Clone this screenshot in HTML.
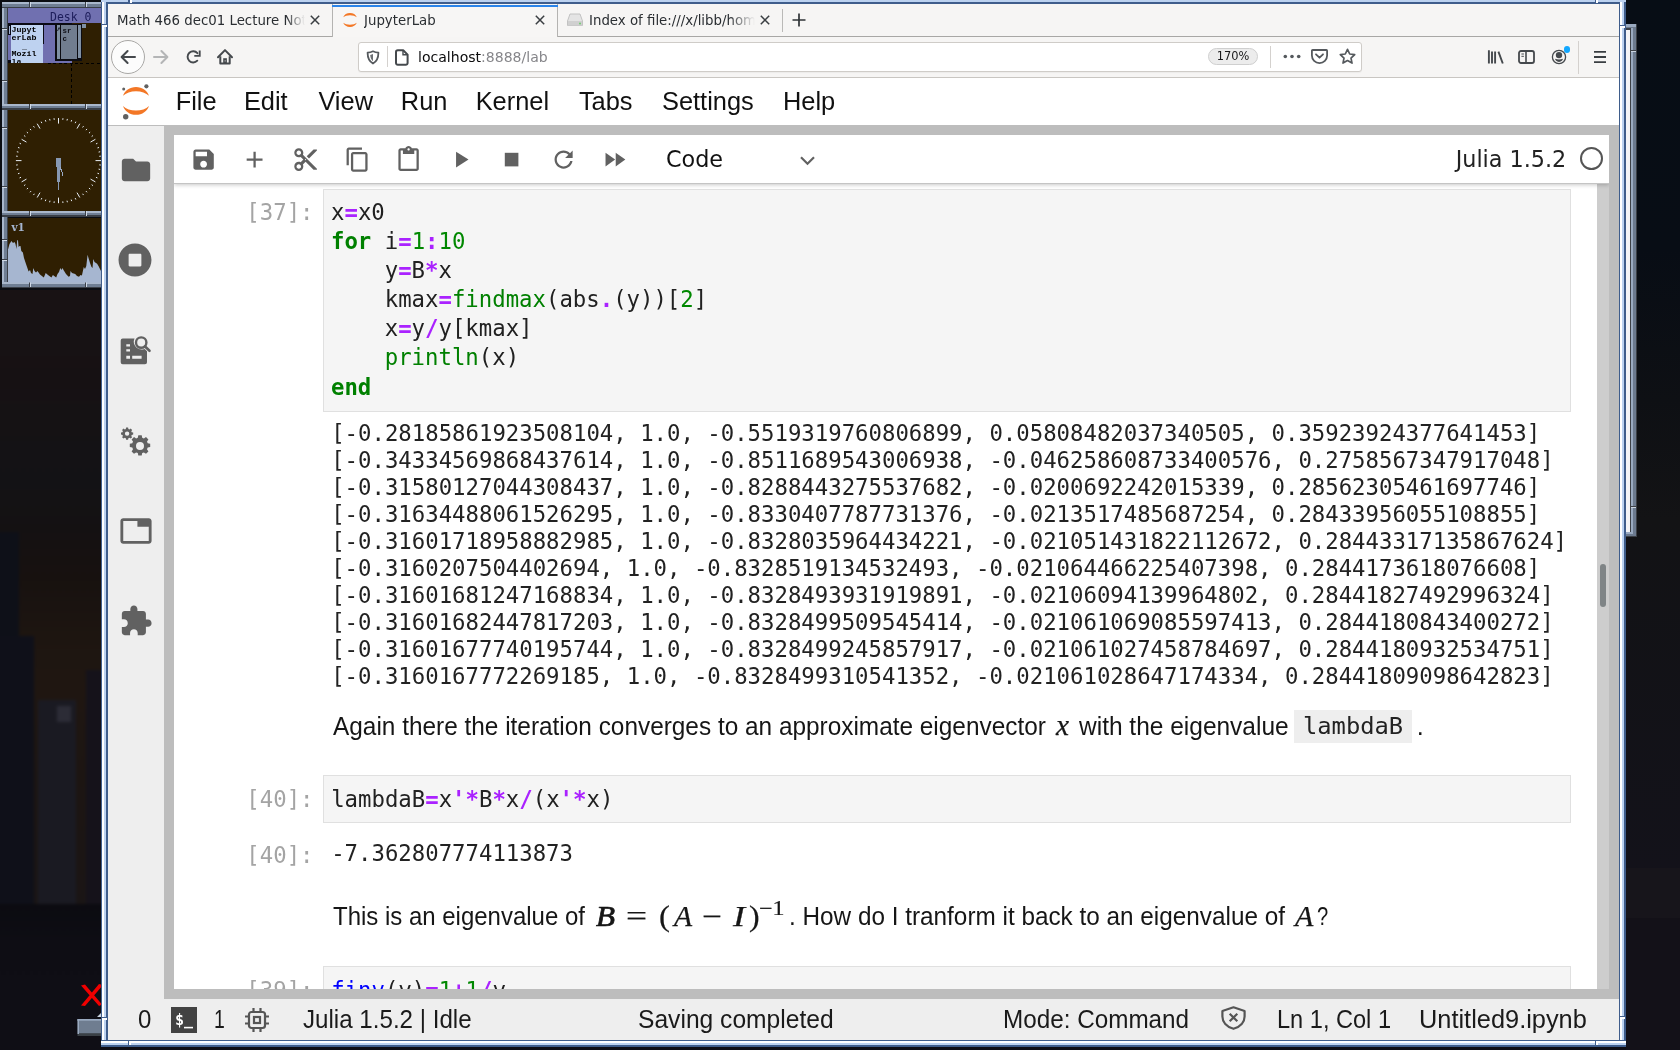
<!DOCTYPE html>
<html lang="en">
<head>
<meta charset="utf-8">
<title>JupyterLab</title>
<style>
*{box-sizing:border-box;margin:0;padding:0}
html,body{width:1680px;height:1050px;overflow:hidden;background:#121116}
body{position:relative;-webkit-font-smoothing:antialiased;font-family:"Liberation Sans",sans-serif;color:#000}
.abs{position:absolute}
svg{display:block;overflow:visible}
#desk{left:0;top:0;width:1680px;height:1050px;background:
 radial-gradient(ellipse 60px 200px at 60px 800px,rgba(40,36,44,.55),rgba(0,0,0,0) 100%),
 linear-gradient(180deg,#14110f 0,#16121a 290px,#1a1214 420px,#151318 600px,#100f16 800px,#0f0e15 1050px)}
#deskr{left:1626px;top:0;width:54px;height:1050px;background:linear-gradient(180deg,#070d15 0,#080d15 250px,#0e1014 400px,#131315 520px,#141217 800px,#16131b 1050px)}
/* ---------- window frame ---------- */
.fb{background:#bcd2f0}
/* ---------- firefox chrome ---------- */
#tabs{will-change:transform;left:108px;top:4px;width:1511px;height:33px;background:#f6f5f4;border-bottom:1px solid #a8a7a5;font-family:"DejaVu Sans",sans-serif;font-size:13.33px;color:#2a2e32;white-space:nowrap}
#tabs .t{top:0;height:33px;line-height:33.500px;overflow:hidden}
#nav{will-change:transform;left:108px;top:37px;width:1511px;height:41px;background:#f6f5f4;border-bottom:1px solid #c9c6c2}
#url{left:250px;top:5px;width:1004px;height:30px;background:#fff;border:1px solid #cfccc8;border-radius:3px;font-family:"DejaVu Sans",sans-serif;font-size:14.05px;line-height:28px;white-space:nowrap;box-shadow:0 1px 1px rgba(0,0,0,.04)}
/* ---------- jupyter ---------- */
#page{will-change:transform;left:108px;top:78px;width:1511px;height:962px;background:#bdbdbd;overflow:hidden}
#menu{left:0;top:0;width:1511px;height:48px;background:#fff;border-bottom:1px solid #bdbdbd;font-size:25.4px;line-height:47px;white-space:nowrap;color:#111}
#menu span{position:absolute;top:0}
#side{left:0;top:48px;width:56px;height:873px;background:#eee}
#nb{left:66px;top:57px;width:1435px;height:854px;background:#fff;overflow:hidden}
#tb{left:0;top:0;width:1435px;height:49px;background:#fff;border-bottom:1px solid #c4c4c4;box-shadow:0 1px 4px rgba(0,0,0,.22);z-index:3}
#tb svg{position:absolute}
#status{left:0;top:921px;width:1511px;height:41px;background:#eee;font-size:25px;line-height:40px;white-space:nowrap;color:#1a1a1a}
#status span{position:absolute;top:0}
.mono{font-family:"DejaVu Sans Mono",monospace;font-size:22.32px;white-space:pre}
.prompt{color:#a4a4a4;text-align:right}
.ed{background:#f5f5f5;border:1px solid #e0e0e0}
.code{line-height:29.17px;color:#212121}
.k{color:#008000;font-weight:bold}
.o{color:#aa22ff;font-weight:bold}
.n{color:#080}
.b{color:#008000}
.d{color:#00f}
.out{line-height:27px;color:#222}
.md{font-size:25.2px;white-space:nowrap;color:#161616}
.f{position:absolute;top:0;transform-origin:0 50%;white-space:nowrap}
.mi{font-family:"Liberation Serif",serif;font-style:italic;-webkit-text-stroke:.25px #111}
.mr{font-family:"Liberation Serif",serif;-webkit-text-stroke:.2px #111}
</style>
</head>
<body>
<div id="desk" class="abs"></div>
<div id="deskr" class="abs"></div>
<!-- faint skyline -->
<div class="abs" style="left:0;top:288px;width:101px;height:762px;overflow:hidden">
<div class="abs" style="left:-6px;top:-6px;width:120px;height:780px;filter:blur(1.600px)">
<div class="abs" style="left:0;top:0;width:120px;height:300px;background:linear-gradient(180deg,#181214 0,#161113 96px,#131215 196px,#141112 246px,#17110f 296px)"></div>
<div class="abs" style="left:0;top:296px;width:120px;height:330px;background:linear-gradient(180deg,#17110f 0,#1d1510 60px,#1f1611 110px,#1c1512 200px,#1a1515 330px)"></div>
<div class="abs" style="left:0;top:250px;width:25px;height:376px;background:#0e1018"></div>
<div class="abs" style="left:0;top:354px;width:40px;height:272px;background:#0f1019"></div>
<div class="abs" style="left:44px;top:418px;width:38px;height:208px;background:#1a1a22"></div>
<div class="abs" style="left:63px;top:424px;width:14px;height:16px;background:#2c2c36"></div>
<div class="abs" style="left:92px;top:388px;width:28px;height:238px;background:#15121a"></div>
<div class="abs" style="left:0;top:622px;width:120px;height:160px;background:linear-gradient(180deg,#0b0b10 0,#0e0d14 40px,#0f0e15 160px)"></div>
</div></div>
<div class="abs" style="left:1626px;top:540px;width:54px;height:330px;background:linear-gradient(180deg,#121215 0,#13121a 330px)"></div>
<div class="abs" style="left:1626px;top:868px;width:54px;height:50px;background:#17151b"></div>
<div class="abs" style="left:1626px;top:918px;width:54px;height:132px;background:#131118"></div>
<svg class="abs" style="left:0;top:0;will-change:transform" width="110" height="300" viewBox="0 0 110 300" shape-rendering="crispEdges">
<rect x="0" y="0" width="110" height="289.500" fill="#0b0d12"/>
<rect x="8" y="8" width="102" height="96" fill="#2f1f02"/>
<rect x="8" y="110" width="102" height="101" fill="#2f1f02"/>
<rect x="8" y="217.5" width="102" height="65" fill="#2f1f02"/>
<rect x="8" y="8" width="102" height="15" fill="#7070b0"/>
<rect x="8" y="23" width="63.5" height="40" fill="#7070b0"/>
<path d="M71.5 63V104" stroke="#000" stroke-width="1" stroke-dasharray="3 2.4" fill="none"/>
<path d="M48 63.5H110" stroke="#000" stroke-width="1" stroke-dasharray="3 2.4" fill="none"/>
<rect x="8" y="23" width="63.5" height="1.5" fill="#0a0a14"/>
<rect x="8" y="24" width="2.5" height="10.5" fill="#0a0a14"/>
<rect x="9" y="25.5" width="1" height="8" fill="#9fb0d0"/>
<rect x="10.5" y="24.5" width="32" height="38.5" fill="#bed2f0"/>
<rect x="42.5" y="24" width="1.3" height="20" fill="#0a0a14"/>
<rect x="8" y="60" width="2.5" height="3" fill="#0a0a14"/>
<rect x="55" y="24" width="27" height="36.8" fill="#0c0c12"/>
<rect x="56.5" y="25" width="3.5" height="34" fill="#8090a4"/>
<rect x="61" y="25" width="16" height="33.5" fill="#717d8f"/>
<rect x="78" y="25" width="3" height="33" fill="#8090a4"/>
<rect x="82" y="24" width="3.5" height="3.5" fill="#8090a4"/>
<clipPath id="mw"><rect x="8" y="24" width="40" height="39"/><rect x="50" y="24" width="40" height="39"/></clipPath>
<g clip-path="url(#mw)" font-family="'Liberation Mono',monospace" font-size="7.4" font-weight="bold" fill="#000" shape-rendering="auto">
<text x="11.5" y="32.3" textLength="25" lengthAdjust="spacingAndGlyphs">Jupyt</text>
<text x="11.5" y="40.3" textLength="25" lengthAdjust="spacingAndGlyphs">erLab</text>
<text x="22" y="48.8" textLength="5" lengthAdjust="spacingAndGlyphs">_</text>
<text x="11.5" y="56.3" textLength="25" lengthAdjust="spacingAndGlyphs">Mozil</text>
<text x="11.5" y="64.3" textLength="10" lengthAdjust="spacingAndGlyphs">la</text>
<text x="57" y="33" fill="#101018">^</text><text x="62.5" y="32.5" fill="#101018">sr</text><text x="62.5" y="40.5" fill="#101018">c</text>
</g>
<text x="50" y="20.5" font-family="'DejaVu Sans Mono',monospace" font-size="11.6" fill="#1c1c5a" shape-rendering="auto" textLength="41.5" lengthAdjust="spacingAndGlyphs">Desk 0</text>
<rect x="2" y="3" width="2" height="101" fill="#a9b7cb"/><rect x="4" y="3" width="2.5" height="101" fill="#6f7e93"/><rect x="6.5" y="3" width="1.5" height="101" fill="#3a3f47"/><rect x="2" y="27.5" width="5" height="1" fill="#3a3f47"/><rect x="2" y="28.5" width="5" height="1.2" fill="#cfd9e6"/><rect x="2" y="79.5" width="5" height="1" fill="#3a3f47"/><rect x="2" y="80.5" width="5" height="1.2" fill="#cfd9e6"/>
<rect x="2" y="2.2" width="108" height="2" fill="#a9b7cb"/><rect x="2" y="4.2" width="108" height="2.5" fill="#6f7e93"/><rect x="2" y="6.7" width="108" height="1.5" fill="#3a3f47"/><rect x="28.5" y="2.2" width="1" height="5" fill="#3a3f47"/><rect x="29.5" y="2.2" width="1.2" height="5" fill="#cfd9e6"/><rect x="84.5" y="2.2" width="1" height="5" fill="#3a3f47"/><rect x="85.5" y="2.2" width="1.2" height="5" fill="#cfd9e6"/>
<rect x="2" y="104" width="2" height="113" fill="#a9b7cb"/><rect x="4" y="104" width="2.5" height="113" fill="#6f7e93"/><rect x="6.5" y="104" width="1.5" height="113" fill="#3a3f47"/><rect x="2" y="126.5" width="5" height="1" fill="#3a3f47"/><rect x="2" y="127.5" width="5" height="1.2" fill="#cfd9e6"/><rect x="2" y="186" width="5" height="1" fill="#3a3f47"/><rect x="2" y="187" width="5" height="1.2" fill="#cfd9e6"/>
<rect x="2" y="103.5" width="108" height="2" fill="#a9b7cb"/><rect x="2" y="105.5" width="108" height="2.5" fill="#6f7e93"/><rect x="2" y="108.0" width="108" height="1.5" fill="#3a3f47"/><rect x="28.5" y="103.5" width="1" height="5" fill="#3a3f47"/><rect x="29.5" y="103.5" width="1.2" height="5" fill="#cfd9e6"/><rect x="84.5" y="103.5" width="1" height="5" fill="#3a3f47"/><rect x="85.5" y="103.5" width="1.2" height="5" fill="#cfd9e6"/>
<rect x="2" y="210.5" width="108" height="2" fill="#a9b7cb"/><rect x="2" y="212.5" width="108" height="2.5" fill="#6f7e93"/><rect x="2" y="215.0" width="108" height="1.5" fill="#3a3f47"/><rect x="28.5" y="210.5" width="1" height="5" fill="#3a3f47"/><rect x="29.5" y="210.5" width="1.2" height="5" fill="#cfd9e6"/><rect x="84.5" y="210.5" width="1" height="5" fill="#3a3f47"/><rect x="85.5" y="210.5" width="1.2" height="5" fill="#cfd9e6"/>
<rect x="2" y="217" width="2" height="71" fill="#a9b7cb"/><rect x="4" y="217" width="2.5" height="71" fill="#6f7e93"/><rect x="6.5" y="217" width="1.5" height="71" fill="#3a3f47"/><rect x="2" y="239" width="5" height="1" fill="#3a3f47"/><rect x="2" y="240" width="5" height="1.2" fill="#cfd9e6"/><rect x="2" y="259" width="5" height="1" fill="#3a3f47"/><rect x="2" y="260" width="5" height="1.2" fill="#cfd9e6"/>
<rect x="2" y="282.3" width="108" height="2" fill="#a9b7cb"/><rect x="2" y="284.3" width="108" height="2.5" fill="#6f7e93"/><rect x="2" y="286.8" width="108" height="1.5" fill="#3a3f47"/><rect x="28.5" y="282.3" width="1" height="5" fill="#3a3f47"/><rect x="29.5" y="282.3" width="1.2" height="5" fill="#cfd9e6"/><rect x="84.5" y="282.3" width="1" height="5" fill="#3a3f47"/><rect x="85.5" y="282.3" width="1.2" height="5" fill="#cfd9e6"/>
<g stroke="#e8eef6" stroke-width="1" shape-rendering="auto">
<line x1="58.50" y1="123.60" x2="58.50" y2="118.00"/>
<line x1="62.79" y1="119.82" x2="62.95" y2="118.23"/>
<line x1="67.02" y1="120.50" x2="67.36" y2="118.93"/>
<line x1="71.17" y1="121.61" x2="71.66" y2="120.08"/>
<line x1="75.18" y1="123.14" x2="75.83" y2="121.68"/>
<line x1="77.00" y1="128.56" x2="79.80" y2="123.71"/>
<line x1="82.60" y1="127.43" x2="83.54" y2="126.14"/>
<line x1="85.93" y1="130.13" x2="87.00" y2="128.94"/>
<line x1="88.97" y1="133.17" x2="90.16" y2="132.10"/>
<line x1="91.67" y1="136.50" x2="92.96" y2="135.56"/>
<line x1="90.54" y1="142.10" x2="95.39" y2="139.30"/>
<line x1="95.96" y1="143.92" x2="97.42" y2="143.27"/>
<line x1="97.49" y1="147.93" x2="99.02" y2="147.44"/>
<line x1="98.60" y1="152.08" x2="100.17" y2="151.74"/>
<line x1="99.28" y1="156.31" x2="100.87" y2="156.15"/>
<line x1="95.50" y1="160.60" x2="101.10" y2="160.60"/>
<line x1="99.28" y1="164.89" x2="100.87" y2="165.05"/>
<line x1="98.60" y1="169.12" x2="100.17" y2="169.46"/>
<line x1="97.49" y1="173.27" x2="99.02" y2="173.76"/>
<line x1="95.96" y1="177.28" x2="97.42" y2="177.93"/>
<line x1="90.54" y1="179.10" x2="95.39" y2="181.90"/>
<line x1="91.67" y1="184.70" x2="92.96" y2="185.64"/>
<line x1="88.97" y1="188.03" x2="90.16" y2="189.10"/>
<line x1="85.93" y1="191.07" x2="87.00" y2="192.26"/>
<line x1="82.60" y1="193.77" x2="83.54" y2="195.06"/>
<line x1="77.00" y1="192.64" x2="79.80" y2="197.49"/>
<line x1="75.18" y1="198.06" x2="75.83" y2="199.52"/>
<line x1="71.17" y1="199.59" x2="71.66" y2="201.12"/>
<line x1="67.02" y1="200.70" x2="67.36" y2="202.27"/>
<line x1="62.79" y1="201.38" x2="62.95" y2="202.97"/>
<line x1="58.50" y1="197.60" x2="58.50" y2="203.20"/>
<line x1="54.21" y1="201.38" x2="54.05" y2="202.97"/>
<line x1="49.98" y1="200.70" x2="49.64" y2="202.27"/>
<line x1="45.83" y1="199.59" x2="45.34" y2="201.12"/>
<line x1="41.82" y1="198.06" x2="41.17" y2="199.52"/>
<line x1="40.00" y1="192.64" x2="37.20" y2="197.49"/>
<line x1="34.40" y1="193.77" x2="33.46" y2="195.06"/>
<line x1="31.07" y1="191.07" x2="30.00" y2="192.26"/>
<line x1="28.03" y1="188.03" x2="26.84" y2="189.10"/>
<line x1="25.33" y1="184.70" x2="24.04" y2="185.64"/>
<line x1="26.46" y1="179.10" x2="21.61" y2="181.90"/>
<line x1="21.04" y1="177.28" x2="19.58" y2="177.93"/>
<line x1="19.51" y1="173.27" x2="17.98" y2="173.76"/>
<line x1="18.40" y1="169.12" x2="16.83" y2="169.46"/>
<line x1="17.72" y1="164.89" x2="16.13" y2="165.05"/>
<line x1="21.50" y1="160.60" x2="15.90" y2="160.60"/>
<line x1="17.72" y1="156.31" x2="16.13" y2="156.15"/>
<line x1="18.40" y1="152.08" x2="16.83" y2="151.74"/>
<line x1="19.51" y1="147.93" x2="17.98" y2="147.44"/>
<line x1="21.04" y1="143.92" x2="19.58" y2="143.27"/>
<line x1="26.46" y1="142.10" x2="21.61" y2="139.30"/>
<line x1="25.33" y1="136.50" x2="24.04" y2="135.56"/>
<line x1="28.03" y1="133.17" x2="26.84" y2="132.10"/>
<line x1="31.07" y1="130.13" x2="30.00" y2="128.94"/>
<line x1="34.40" y1="127.43" x2="33.46" y2="126.14"/>
<line x1="40.00" y1="128.56" x2="37.20" y2="123.71"/>
<line x1="41.82" y1="123.14" x2="41.17" y2="121.68"/>
<line x1="45.83" y1="121.61" x2="45.34" y2="120.08"/>
<line x1="49.98" y1="120.50" x2="49.64" y2="118.93"/>
<line x1="54.21" y1="119.82" x2="54.05" y2="118.23"/>
</g>
<rect x="56" y="158" width="5" height="9" fill="#8798b2"/>
<rect x="57" y="166" width="2.6" height="16" fill="#8798b2"/>
<path d="M60 167l2 5v4" stroke="#9aaac4" stroke-width="1" fill="none"/>
<rect x="58" y="182" width="1" height="8" fill="#8798b2"/>
<path d="M8 282.5 L8 249.5 L9.5 244 L11.4 241 L13 243 L14.5 242 L15.5 244 L16.5 249 L17.2 240 L18 240.5 L18.6 247 L19.6 246 L20.5 246 L21.3 251 L22.9 252.4 L24 258 L26 264 L28.6 271.4 L30 270 L31 273 L32.5 274 L33.3 268 L34.5 271 L36 272.5 L37.5 271 L40 274.5 L43.8 277.6 L45.7 272.9 L48 275 L51.4 277.6 L52.9 275 L56.2 277.6 L57.5 274 L59 272 L60.3 268 L61.5 270 L62.5 268 L63.5 270 L66 274 L68.6 276.7 L70 276 L70.5 271 L72 273 L75.2 274 L77 276 L79 276.7 L80.5 275 L81.9 275.5 L83.8 267 L85 269 L86.3 266 L87.6 254.8 L88.5 258 L90 263 L91.4 266.7 L92.5 268 L93.3 259 L94.5 262 L96 263 L97.1 263.8 L98.5 266 L101 271 L110 275 L110 282.5Z" fill="#a6b6d0" shape-rendering="auto"/>
<text x="11.5" y="231" font-family="'DejaVu Serif',serif" font-weight="bold" font-size="10.5" fill="#a6b6d0" shape-rendering="auto">v1</text>
</svg>
<!-- bottom-left bits -->
<svg class="abs" style="left:70px;top:975px" width="40" height="70" viewBox="70 975 40 70">
 <path d="M81 985.5l4-1 17 20-3 1.5zM99 984l4 1-18 21-4-.5z" fill="#f00000"/>
 <path d="M97 1017l4-4v4z" fill="#c9d3e0"/>
 <rect x="77.500" y="1019" width="30" height="17" fill="#3a4046"/>
 <rect x="77.500" y="1019" width="30" height="2" fill="#9aaac0"/>
 <rect x="77.500" y="1019" width="1.500" height="15" fill="#9aaac0"/>
 <rect x="79" y="1020.700" width="29" height="12.500" fill="#6f7d90"/>
</svg>
<!-- second window peeking out at right -->
<svg class="abs" style="left:1620px;top:20px" width="24" height="520" viewBox="1620 20 24 520" shape-rendering="crispEdges">
 <rect x="1620" y="23.5" width="17" height="513" fill="#3c4046"/>
 <rect x="1620" y="23.5" width="15.5" height="3" fill="#9aaac0"/>
 <rect x="1620" y="26.5" width="13" height="1.7" fill="#6c7a8e"/>
 <rect x="1620" y="30" width="10" height="504" fill="#f4f4f6"/>
 <rect x="1631" y="28.2" width="2.2" height="505" fill="#9aaac0"/>
 <rect x="1633.2" y="26.5" width="2.3" height="508" fill="#6c7a8e"/>
 <rect x="1620" y="532" width="13" height="2" fill="#9aaac0"/>
 <rect x="1620" y="534" width="15.5" height="1.5" fill="#6c7a8e"/>
 <rect x="1631" y="49.5" width="5" height="1" fill="#3c4046"/><rect x="1631" y="50.5" width="5" height="1.2" fill="#c9d3e0"/>
 <rect x="1631" y="506" width="5" height="1" fill="#3c4046"/><rect x="1631" y="507" width="5" height="1.2" fill="#c9d3e0"/>
</svg>
<!-- FVWM window frame -->
<div class="abs" style="left:101px;top:0;width:1525px;height:4px;background:linear-gradient(180deg,#bcd2f0 0,#bcd2f0 2px,#3f5d8b 2px,#3f5d8b 4px)"></div>
<div class="abs" style="left:101px;top:0;width:7px;height:1047px;background:linear-gradient(90deg,#3f5d8b 0,#3f5d8b 1px,#fff 1px,#fff 3px,#bcd2f0 3px,#bcd2f0 5.3px,#3f5d8b 5.3px,#3f5d8b 7px)"></div>
<div class="abs" style="left:1619px;top:0;width:7px;height:1047px;background:linear-gradient(90deg,#3f5d8b 0,#3f5d8b 1px,#fff 1px,#fff 3px,#bcd2f0 3px,#bcd2f0 5.5px,#3f5d8b 5.5px,#3f5d8b 7px)"></div>
<div class="abs" style="left:101px;top:1040px;width:1525px;height:7px;background:linear-gradient(180deg,#3f5d8b 0,#3f5d8b 1px,#fff 1px,#fff 3px,#bcd2f0 3px,#bcd2f0 5.3px,#3f5d8b 5.3px,#3f5d8b 7px)"></div>
<!-- top strip corners -->
<div class="abs" style="left:101px;top:0;width:7px;height:2px;background:#bcd2f0"></div>
<div class="abs" style="left:1619px;top:0;width:7px;height:2px;background:#bcd2f0"></div>
<!-- frame notches -->
<div class="abs" style="left:128px;top:0;width:2px;height:3px;background:#3f5d8b"></div><div class="abs" style="left:130px;top:0;width:2px;height:3px;background:#fff"></div>
<div class="abs" style="left:1595px;top:0;width:1px;height:3px;background:#3f5d8b"></div><div class="abs" style="left:1596px;top:0;width:2px;height:3px;background:#fff"></div>
<div class="abs" style="left:102px;top:24px;width:6px;height:1px;background:#3f5d8b"></div><div class="abs" style="left:102px;top:25px;width:5px;height:2px;background:#fff"></div>
<div class="abs" style="left:1620px;top:25px;width:6px;height:1px;background:#3f5d8b"></div><div class="abs" style="left:1620px;top:26px;width:5px;height:2px;background:#fff"></div>
<div class="abs" style="left:102px;top:1017px;width:6px;height:1px;background:#3f5d8b"></div><div class="abs" style="left:102px;top:1018px;width:5px;height:2px;background:#fff"></div>
<div class="abs" style="left:1620px;top:1016px;width:6px;height:1px;background:#3f5d8b"></div><div class="abs" style="left:1620px;top:1017px;width:5px;height:2px;background:#fff"></div>
<div class="abs" style="left:128px;top:1041px;width:1px;height:5px;background:#3f5d8b"></div><div class="abs" style="left:129px;top:1041px;width:2px;height:4px;background:#fff"></div>
<div class="abs" style="left:1595px;top:1041px;width:1px;height:5px;background:#3f5d8b"></div><div class="abs" style="left:1596px;top:1041px;width:2px;height:4px;background:#fff"></div>
<!-- Firefox tab bar -->
<div id="tabs" class="abs">
 <div class="t abs" style="left:9px;width:193px;-webkit-mask-image:linear-gradient(90deg,#000 169px,transparent 188px);mask-image:linear-gradient(90deg,#000 169px,transparent 188px)">Math 466 dec01 Lecture Notes</div>
 <svg class="abs" style="left:202px;top:11px" width="10" height="10" viewBox="0 0 10 10"><path d="M.8.8l8.4 8.4M9.2.8L.8 9.2" stroke="#3a3e42" stroke-width="1.500" fill="none"/></svg>
 <!-- selected tab -->
 <div class="abs" style="left:224px;top:0;width:226px;height:33px;background:#f7f6f5;border-left:1px solid #b4b3b1;border-right:1px solid #b4b3b1"></div>
 <div class="abs" style="left:224px;top:.600px;width:226px;height:2px;background:#2a84ea"></div>
 <svg class="abs" style="left:234px;top:7px" width="16" height="18" viewBox="0 0 16 18"><path d="M1.2 6.2C2.2 3.6 4.9 2 8 2s5.8 1.6 6.8 4.2C13.2 4.9 10.8 4.2 8 4.2S2.8 4.9 1.2 6.2zM1.2 11.8C2.2 14.4 4.9 16 8 16s5.8-1.6 6.8-4.2c-1.6 1.3-4 2-6.800 2s-5.200-.7-6.800-2z" fill="#f37726"/></svg>
 <div class="t abs" style="left:256px;width:170px">JupyterLab</div>
 <svg class="abs" style="left:427px;top:11px" width="10" height="10" viewBox="0 0 10 10"><path d="M.8.8l8.4 8.4M9.2.8L.8 9.2" stroke="#3a3e42" stroke-width="1.500" fill="none"/></svg>
 <!-- tab 3 -->
 <svg class="abs" style="left:459px;top:9px" width="16" height="14" viewBox="0 0 16 14"><path d="M3 1h10l2.5 7v4.5H.5V8z" fill="#e4e4e4" stroke="#c2c2c2" stroke-width="1"/><path d="M1 8h14v4.5H1z" fill="#d0d0d0"/><circle cx="13" cy="10.5" r=".9" fill="#6c6"/></svg>
 <div class="t abs" style="left:481px;width:167px;-webkit-mask-image:linear-gradient(90deg,#000 140px,transparent 166px);mask-image:linear-gradient(90deg,#000 140px,transparent 166px)">Index of file:///x/libb/home/</div>
 <svg class="abs" style="left:652px;top:11px" width="10" height="10" viewBox="0 0 10 10"><path d="M.8.8l8.4 8.4M9.2.8L.8 9.2" stroke="#3a3e42" stroke-width="1.500" fill="none"/></svg>
 <div class="abs" style="left:674px;top:5px;width:1px;height:23px;background:#bab9b7"></div>
 <svg class="abs" style="left:684px;top:9px" width="14" height="14" viewBox="0 0 14 14"><path d="M7 .5v13M.5 7h13" stroke="#2f3336" stroke-width="1.7" fill="none"/></svg>
</div>
<!-- Firefox nav bar -->
<div id="nav" class="abs">
 <div class="abs" style="left:3px;top:3px;width:34px;height:34px;border-radius:50%;background:#fcfcfc;border:1px solid #a9a8a6"></div>
 <svg class="abs" style="left:12px;top:12px" width="16" height="16" viewBox="0 0 16 16"><path d="M15 8H2M7.6 2L1.6 8l6 6" stroke="#45494d" stroke-width="2" fill="none" stroke-linecap="round" stroke-linejoin="round"/></svg>
 <svg class="abs" style="left:45px;top:12px" width="16" height="16" viewBox="0 0 16 16"><path d="M1 8h13M8.400 2l6 6-6 6" stroke="#b4b5b6" stroke-width="2" fill="none" stroke-linecap="round" stroke-linejoin="round"/></svg>
 <svg class="abs" style="left:77px;top:12px" width="16" height="16" viewBox="0 0 16 16"><path d="M12.300 11.700A5.600 5.600 0 1 1 12.400 4.200" stroke="#45494d" stroke-width="1.900" fill="none" stroke-linecap="round"/><path d="M14.700 1.400v5.500H9.300" stroke="#45494d" stroke-width="1.900" fill="none" stroke-linejoin="miter"/></svg>
 <svg class="abs" style="left:109px;top:12px" width="16" height="16" viewBox="0 0 16 16"><path d="M1 8.200L8 1.100l7 7.100" stroke="#45494d" stroke-width="2" fill="none" stroke-linecap="round" stroke-linejoin="round"/><path d="M3.300 7.200v7.400h9.400V7.200" stroke="#45494d" stroke-width="2" fill="none" stroke-linejoin="round"/><path d="M6.200 9.200h3.700v5.600H6.200z" fill="#45494d"/><rect x="7.700" y="11.300" width=".8" height="1.200" fill="#f6f5f4"/></svg>
 <div id="url" class="abs">
  <svg class="abs" style="left:7px;top:6.500px" width="14" height="15" viewBox="0 0 14 15"><path d="M7 1.300c1.800.9 3.600 1.300 5.400 1.400 0 5.200-1.800 8.800-5.400 10.800C3.400 11.500 1.600 7.900 1.600 2.700c1.800-.1 3.600-.5 5.400-1.400z" stroke="#55595d" stroke-width="1.800" fill="none" stroke-linejoin="round"/><path d="M7 4v7.300c-1.700-1.400-2.600-3.500-2.800-6.300C5.300 4.800 6.200 4.500 7 4z" fill="#6a6e72"/></svg>
  <div class="abs" style="left:28px;top:3px;width:1px;height:21px;background:#d4d1ce"></div>
  <svg class="abs" style="left:35px;top:6px" width="16" height="17" viewBox="0 0 16 17"><path d="M3.800 1.200h5.400L13.600 5.600v8.400a1.800 1.800 0 0 1-1.800 1.800H3.800a1.800 1.800 0 0 1-1.800-1.800V3a1.800 1.800 0 0 1 1.800-1.800z" stroke="#45494d" stroke-width="2" fill="none" stroke-linejoin="round"/><path d="M9 1.500v4.300h4.300" stroke="#45494d" stroke-width="1.400" fill="none"/></svg>
  <div class="abs" style="left:59px;top:0;color:#0c0c0d">localhost<span style="color:#86868a">:8888/lab</span></div>
  <div class="abs" style="left:849px;top:5px;width:50px;height:17px;border-radius:9px;background:#ececec;border:1px solid #cfcfcf;font-size:11.4px;line-height:15px;text-align:center;color:#18181a">170%</div>
  <div class="abs" style="left:911px;top:3px;width:1px;height:22px;background:#d4d1ce"></div>
  <svg class="abs" style="left:924px;top:11px" width="18" height="5" viewBox="0 0 18 5"><circle cx="2.300" cy="2.500" r="1.800" fill="#55595d"/><circle cx="9" cy="2.500" r="1.800" fill="#55595d"/><circle cx="15.700" cy="2.500" r="1.800" fill="#55595d"/></svg>
  <svg class="abs" style="left:952px;top:6px" width="17" height="15" viewBox="0 0 17 15"><path d="M1.600 1h13.800a.7.700 0 0 1 .7.700V6.500a7.600 7.600 0 0 1-15.200 0V1.700a.7.700 0 0 1 .7-.7z" stroke="#55595d" stroke-width="1.800" fill="none"/><path d="M5 5.300l3.500 3.400L12 5.300" stroke="#55595d" stroke-width="1.800" fill="none" stroke-linecap="round" stroke-linejoin="round"/></svg>
  <svg class="abs" style="left:980px;top:5px" width="17" height="17" viewBox="0 0 17 17"><path d="M8.500 1.300l2.200 4.700 5 .6-3.700 3.500 1 5-4.500-2.500L4 15.100l1-5L1.300 6.600l5-.6z" stroke="#55595d" stroke-width="1.700" fill="none" stroke-linejoin="round"/></svg>
 </div>
 <svg class="abs" style="left:1379px;top:12px" width="17" height="16" viewBox="0 0 17 16"><path d="M1.900 1.200v13.300M5 2.400v12.100M8.100 2.400v12.100M11.400 2.600l4.400 11.900" stroke="#45494d" stroke-width="1.900" fill="none" stroke-linecap="butt"/></svg>
 <svg class="abs" style="left:1410px;top:13px" width="17" height="14" viewBox="0 0 17 14"><rect x="1" y="1" width="15" height="12" rx="2" stroke="#45494d" stroke-width="1.800" fill="none"/><path d="M8 1v12" stroke="#45494d" stroke-width="1.600"/><path d="M3.400 4h2.500M3.400 6.300h2.500" stroke="#45494d" stroke-width="1"/></svg>
 <svg class="abs" style="left:1443px;top:12px" width="16" height="16" viewBox="0 0 16 16"><circle cx="8" cy="8" r="6.600" stroke="#45494d" stroke-width="1.300" fill="none"/><circle cx="8" cy="6.100" r="3.200" fill="#45494d"/><path d="M4 9.700Q8 11.100 12 9.700Q11.700 12.100 8 13Q4.300 12.100 4 9.700z" fill="#45494d"/></svg>
 <div class="abs" style="left:1455.800px;top:9.400px;width:6.600px;height:6.600px;border-radius:50%;background:#12a8ff"></div>
 <div class="abs" style="left:1470px;top:4px;width:1px;height:33px;background:#d4d1ce"></div>
 <svg class="abs" style="left:1485px;top:13px" width="14" height="14" viewBox="0 0 14 14"><path d="M1 1.800h12M1 7h12M1 12.200h12" stroke="#3a3e42" stroke-width="1.800" fill="none"/></svg>
</div>
<div id="page" class="abs">
 <!-- menu bar -->
 <div id="menu" class="abs">
  <svg class="abs" style="left:12px;top:4px" width="32" height="40" viewBox="120 82 32 40">
   <path d="M123 95.800C124.600 90.600 129.800 87 136 87s11.400 3.600 13 8.800C146 92.900 141.300 91.200 136 91.200S126 92.900 123 95.800z" fill="#f37726"/>
   <path d="M123 106C124.600 111.200 129.800 114.800 136 114.800s11.400-3.600 13-8.800C146 108.900 141.300 110.600 136 110.600S126 108.900 123 106z" fill="#f37726"/>
   <circle cx="146.400" cy="86.300" r="2.100" fill="#616161"/><circle cx="123.700" cy="89" r="1.500" fill="#616161"/><circle cx="125.700" cy="116.700" r="2.700" fill="#616161"/>
  </svg>
  <span style="left:67.700px">File</span><span style="left:135.900px">Edit</span><span style="left:210.400px">View</span><span style="left:292.800px">Run</span><span style="left:367.700px">Kernel</span><span style="left:470.900px">Tabs</span><span style="left:554px">Settings</span><span style="left:675px">Help</span>
 </div>
 <!-- left sidebar -->
 <div id="side" class="abs">
  <svg class="abs" style="left:10.500px;top:27px" width="34" height="34" viewBox="0 0 24 24"><path fill="#616161" d="M10 4H4c-1.100 0-1.990.9-1.990 2L2 18c0 1.100.9 2 2 2h16c1.100 0 2-.9 2-2V8c0-1.100-.9-2-2-2h-8l-2-2z"/></svg>
  <svg class="abs" style="left:10.300px;top:117.100px" width="34" height="34" viewBox="0 0 512 512"><path fill="#616161" d="M256 8C119 8 8 119 8 256s111 248 248 248 248-111 248-248S393 8 256 8zm96 328c0 8.800-7.200 16-16 16H176c-8.800 0-16-7.200-16-16V176c0-8.800 7.200-16 16-16h160c8.800 0 16 7.200 16 16v160z"/></svg>
  <svg class="abs" style="left:12px;top:208px" width="32" height="32" viewBox="120 334 32 32">
   <path fill="#616161" d="M122.700 338.600h11.800a7.800 7.800 0 0 0 10.100 10.300l2.400 2.400v10.900a2 2 0 0 1-2 2h-22.300a2 2 0 0 1-2-2v-21.600a2 2 0 0 1 2-2z"/>
   <path fill="#eee" d="M126.300 344.300h3.700v2.200h-3.700zM126.300 349.300h3.700v2.200h-3.700zM126.300 355.800h3.700v3h-3.700zM132.200 355.800h9.400v3h-9.400z"/>
   <circle cx="141.200" cy="342.600" r="5.200" stroke="#616161" stroke-width="2.400" fill="none"/>
   <path d="M144.800 346.300l4.700 4.500" stroke="#616161" stroke-width="2.600" stroke-linecap="round"/>
  </svg>
  <svg class="abs" style="left:10px;top:298.700px" width="36" height="36" viewBox="118 424 36 36">
   <g fill="#616161">
    <path id="gearL" d="M138.300 434.200h3.400l.5 2.500 1.700.7 2.100-1.400 2.400 2.400-1.400 2.100.7 1.700 2.500.5v3.400l-2.500.5-.7 1.700 1.400 2.100-2.400 2.400-2.100-1.400-1.700.7-.5 2.500h-3.400l-.5-2.500-1.700-.7-2.100 1.400-2.400-2.400 1.400-2.100-.7-1.700-2.500-.5v-3.400l2.500-.5.7-1.700-1.400-2.100 2.400-2.400 2.100 1.400 1.700-.7zM140 441a4 4 0 1 0 0 8 4 4 0 0 0 0-8z" fill-rule="evenodd"/>
    <path d="M126.100 426.500h2l.3 1.500 1 .4 1.300-.8 1.400 1.400-.8 1.300.4 1 1.500.3v2l-1.500.3-.4 1 .8 1.300-1.400 1.400-1.300-.8-1 .4-.3 1.500h-2l-.3-1.500-1-.4-1.300.8-1.400-1.400.8-1.300-.4-1-1.500-.3v-2l1.500-.3.4-1-.8-1.300 1.400-1.400 1.300.8 1-.4zM127.100 430.400a2.200 2.200 0 1 0 0 4.400 2.200 2.200 0 0 0 0-4.400z" fill-rule="evenodd"/>
   </g>
  </svg>
  <svg class="abs" style="left:10.500px;top:387.500px" width="34" height="34" viewBox="0 0 24 24"><path fill="#616161" d="M21 3H3c-1.100 0-2 .9-2 2v14c0 1.100.9 2 2 2h18c1.100 0 2-.9 2-2V5c0-1.100-.9-2-2-2zm0 16H3V5h10v4h8v10z"/></svg>
  <svg class="abs" style="left:10.500px;top:478px" width="34" height="34" viewBox="0 0 24 24"><path fill="#616161" d="M20.500 11H19V7c0-1.100-.9-2-2-2h-4V3.500C13 2.120 11.880 1 10.500 1S8 2.120 8 3.500V5H4c-1.100 0-1.990.9-1.990 2v3.800H3.500c1.490 0 2.700 1.210 2.700 2.700s-1.210 2.700-2.700 2.700H2V20c0 1.100.9 2 2 2h3.800v-1.500c0-1.490 1.210-2.700 2.700-2.700 1.490 0 2.700 1.210 2.700 2.700V22H17c1.100 0 2-.9 2-2v-4h1.500c1.380 0 2.500-1.120 2.500-2.500S21.880 11 20.500 11z"/></svg>
 </div>
 <!-- notebook panel -->
 <div id="nb" class="abs">
  <div id="tb" class="abs">
   <svg style="left:16.100px;top:10.900px" width="27.200" height="27.200" viewBox="0 0 24 24"><path fill="#616161" d="M17 3H5c-1.110 0-2 .9-2 2v14c0 1.100.89 2 2 2h14c1.100 0 2-.9 2-2V7l-4-4zm-5 16c-1.660 0-3-1.340-3-3s1.340-3 3-3 3 1.340 3 3-1.340 3-3 3zm3-10H5V5h10v4z"/></svg>
   <svg style="left:67.100px;top:10.900px" width="27.200" height="27.200" viewBox="0 0 24 24"><path fill="#616161" d="M19 13h-6v6h-2v-6H5v-2h6V5h2v6h6v2z"/></svg>
   <svg style="left:118.100px;top:10.900px" width="27.200" height="27.200" viewBox="0 0 24 24"><path fill="#616161" d="M9.640 7.640c.23-.5.360-1.050.360-1.640 0-2.210-1.790-4-4-4S2 3.790 2 6s1.790 4 4 4c.59 0 1.140-.13 1.640-.36L10 12l-2.360 2.360C7.140 14.130 6.590 14 6 14c-2.210 0-4 1.790-4 4s1.790 4 4 4 4-1.790 4-4c0-.59-.13-1.140-.36-1.640L12 14l7 7h3v-1L9.640 7.640zM6 8c-1.100 0-2-.89-2-2s.9-2 2-2 2 .89 2 2-.9 2-2 2zm0 12c-1.100 0-2-.89-2-2s.9-2 2-2 2 .89 2 2-.9 2-2 2zm6-7.500c-.28 0-.5-.22-.5-.5s.22-.5.5-.5.500.22.500.5-.22.500-.5.500zM19 3l-6 6 2 2 7-7V3z"/></svg>
   <svg style="left:170.100px;top:10.900px" width="27.200" height="27.200" viewBox="0 0 18 18"><path fill="#616161" d="M11.900,1H3.200C2.400,1,1.700,1.700,1.700,2.500v10.200h1.500V2.500h8.700V1z M14.100,3.900h-8c-0.800,0-1.500,0.700-1.500,1.500v10.200c0,0.800,0.700,1.500,1.500,1.500h8 c0.800,0,1.500-0.700,1.500-1.500V5.400C15.500,4.600,14.900,3.900,14.100,3.900z M14.100,15.500h-8V5.400h8V15.500z"/></svg>
   <svg style="left:221.100px;top:10.900px" width="27.200" height="27.200" viewBox="0 0 24 24"><path fill="#616161" d="M19 2h-4.180C14.400.84 13.300 0 12 0c-1.300 0-2.400.84-2.820 2H5c-1.100 0-2 .9-2 2v16c0 1.100.9 2 2 2h14c1.100 0 2-.9 2-2V4c0-1.100-.9-2-2-2zm-7 0c.55 0 1 .45 1 1s-.45 1-1 1-1-.45-1-1 .45-1 1-1zm7 18H5V4h2v3h10V4h2v16z"/></svg>
   <svg style="left:273.400px;top:10.900px" width="27.200" height="27.200" viewBox="0 0 24 24"><path fill="#616161" d="M8 5v14l11-7z"/></svg>
   <svg style="left:324.400px;top:10.900px" width="27.200" height="27.200" viewBox="0 0 24 24"><path fill="#616161" d="M6 6h12v12H6z"/></svg>
   <svg style="left:376.400px;top:10.900px" width="27.200" height="27.200" viewBox="0 0 18 18"><path fill="#616161" d="M9 13.500c-2.490 0-4.500-2.010-4.500-4.500S6.510 4.500 9 4.500c1.240 0 2.360.52 3.170 1.330L10 8h5V3l-1.760 1.760C12.150 3.680 10.660 3 9 3 5.690 3 3.010 5.690 3.010 9S5.690 15 9 15c2.970 0 5.430-2.160 5.900-5h-1.520c-.46 2-2.240 3.500-4.380 3.500z"/></svg>
   <svg style="left:427.300px;top:10.900px" width="27.200" height="27.200" viewBox="0 0 24 24"><path fill="#616161" d="M4 18l8.500-6L4 6v12zm9-12v12l8.500-6L13 6z"/></svg>
   <div class="abs" style="left:492px;top:0;font-family:'DejaVu Sans',sans-serif;font-size:22.300px;line-height:48px;color:#111">Code</div>
   <svg style="left:625.500px;top:21px" width="15" height="10" viewBox="0 0 15 10"><path d="M1 1.300l6.500 6.400L14 1.300" stroke="#616161" stroke-width="2.200" fill="none"/></svg>
   <div class="abs" style="left:1180px;width:212.300px;text-align:right;top:0;font-family:'DejaVu Sans',sans-serif;font-size:22.300px;line-height:49px;color:#222">Julia 1.5.2</div>
   <div class="abs" style="left:1406px;top:12.200px;width:23px;height:23px;border-radius:50%;border:2px solid #555"></div>
  </div>
  <!-- scrollbar -->
  <div class="abs" style="left:1423px;top:49px;width:12px;height:805px;background:#cdcdcd"></div>
  <div class="abs" style="left:1426.300px;top:429px;width:5.600px;height:43px;border-radius:3px;background:#7f8486"></div>
  <!-- cell 1 -->
  <div class="abs mono prompt" style="left:40px;width:99.500px;top:63.400px;line-height:29.170px">[37]:</div>
  <div class="abs ed" style="left:149px;top:54px;width:1248px;height:223px"></div>
  <div class="abs mono code" style="left:157px;top:62.600px">x<span class="o">=</span>x0
<span class="k">for</span> i<span class="o">=</span><span class="n">1</span><span class="o">:</span><span class="n">10</span>
    y<span class="o">=</span>B<span class="o">*</span>x
    kmax<span class="o">=</span><span class="b">findmax</span>(abs<span class="o">.</span>(y))[<span class="n">2</span>]
    x<span class="o">=</span>y<span class="o">/</span>y[kmax]
    <span class="b">println</span>(x)
<span class="k">end</span></div>
  <div class="abs mono out" style="left:157.200px;top:284.500px">[-0.28185861923508104, 1.0, -0.5519319760806899, 0.05808482037340505, 0.35923924377641453]
[-0.34334569868437614, 1.0, -0.8511689543006938, -0.046258608733400576, 0.2758567347917048]
[-0.31580127044308437, 1.0, -0.8288443275537682, -0.0200692242015339, 0.28562305461697746]
[-0.31634488061526295, 1.0, -0.8330407787731376, -0.0213517485687254, 0.28433956055108855]
[-0.31601718958882985, 1.0, -0.8328035964434221, -0.021051431822112672, 0.28443317135867624]
[-0.3160207504402694, 1.0, -0.8328519134532493, -0.021064466225407398, 0.2844173618076608]
[-0.31601681247168834, 1.0, -0.8328493931919891, -0.02106094139964802, 0.28441827492996324]
[-0.31601682447817203, 1.0, -0.8328499509545414, -0.021061069085597413, 0.2844180843400272]
[-0.31601677740195744, 1.0, -0.8328499245857917, -0.021061027458784697, 0.2844180932534751]
[-0.3160167772269185, 1.0, -0.8328499310541352, -0.021061028647174334, 0.28441809098642823]</div>
  <!-- markdown 1 -->
  <div class="abs md" style="left:0;top:575.800px;line-height:30px;width:1400px;height:30px">
   <span class="f" id="md1a" style="left:158.958px;transform:scaleX(0.9679)">Again there the iteration converges to an approximate eigenvector</span>
   <span class="f mi" id="md1x" style="font-size:29px;top:-1.300px;left:882.393px;transform:scaleX(1.0096)">x</span>
   <span class="f" id="md1b" style="left:904.728px;transform:scaleX(0.9723)">with the eigenvalue</span>
   <span class="abs" style="left:1120.300px;top:-0.800px;width:117.700px;height:32.500px;background:#eee"></span>
   <span class="f" id="md1c" style="font-family:'DejaVu Sans Mono',monospace;font-size:23.500px;color:#222;left:1128.729px;transform:scaleX(1.0104)">lambdaB</span>
   <span class="f" id="md1d" style="left:1242.75px;transform:scaleX(1.0000)">.</span>
  </div>
  <!-- cell 2 -->
  <div class="abs mono prompt" style="left:40px;width:99.500px;top:650.400px;line-height:29.170px">[40]:</div>
  <div class="abs ed" style="left:149px;top:640px;width:1248px;height:48px"></div>
  <div class="abs mono code" style="left:157.200px;top:650.400px">lambdaB<span class="o">=</span>x<span class="o">'*</span>B<span class="o">*</span>x<span class="o">/</span>(x<span class="o">'*</span>x)</div>
  <div class="abs mono prompt" style="left:40px;width:99.500px;top:705.900px;line-height:29.170px">[40]:</div>
  <div class="abs mono out" style="left:157.200px;top:704.500px">-7.362807774113873</div>
  <!-- markdown 2 -->
  <div class="abs md" style="left:0;top:765.800px;line-height:30px;width:1400px;height:30px">
   <span class="f" id="md2a" style="left:158.96px;transform:scaleX(0.9519)">This is an eigenvalue of</span>
   <span class="f mi" id="m_B" style="font-size:29px;-webkit-text-stroke:.7px #111;left:421.548px;transform:scaleX(1.0744)">B</span>
   <span class="f mr" id="m_eq" style="font-size:29px;left:452.013px;transform:scaleX(1.2895)">=</span>
   <span class="f mr" id="m_lp" style="font-size:29px;left:484.869px;transform:scaleX(1.1308)">(</span>
   <span class="f mi" id="m_A" style="font-size:29px;left:500.255px;transform:scaleX(1.0221)">A</span>
   <span class="f mr" id="m_mi" style="font-size:29px;left:528.161px;transform:scaleX(1.2173)">−</span>
   <span class="f mi" id="m_I" style="font-size:29px;left:559px;transform:scaleX(1.2500)">I</span>
   <span class="f mr" id="m_rp" style="font-size:29px;left:575px;transform:scaleX(1.1000)">)</span>
   <span class="f mr" id="m_su" style="font-size:20.500px;top:-8px;left:585.416px;transform:scaleX(1.1690)">−1</span>
   <span class="f" id="md2b" style="left:614.547px;transform:scaleX(0.9653)">. How do I tranform it back to an eigenvalue of</span>
   <span class="f mi" id="md2A" style="font-size:29px;left:1121.487px;transform:scaleX(1.0340)">A</span>
   <span class="f" id="md2q" style="left:1142.9px;transform:scaleX(0.8000)">?</span>
  </div>
  <!-- cell 3 -->
  <div class="abs mono prompt" style="left:40px;width:99.500px;top:841.400px;line-height:29.170px">[39]:</div>
  <div class="abs ed" style="left:149px;top:831px;width:1248px;height:47px"></div>
  <div class="abs mono code" style="left:157.200px;top:841.400px"><span class="d">finv</span>(y)<span class="o">=</span><span class="n">1</span><span class="o">+</span><span class="n">1</span><span class="o">/</span>y</div>
 </div>
 <!-- status bar -->
 <div id="status" class="abs">
  <span class="f" id="s0" style="left:30.483px;transform:scaleX(0.9603)">0</span>
  <div class="abs" style="left:63px;top:8px;width:26px;height:26px;background:#424242;color:#fff;font-family:'DejaVu Sans Mono',monospace;font-weight:bold;font-size:15px;line-height:26px;text-align:center">$_</div>
  <span class="f" id="s1" style="left:106.416px;transform:scaleX(0.7786)">1</span>
  <svg class="abs" style="left:137px;top:9px" width="24" height="24" viewBox="0 0 24 24"><g stroke="#555" stroke-width="2.200" fill="none"><rect x="4" y="4" width="16" height="16" rx="2.500"/><rect x="9" y="9" width="6" height="6"/><path d="M8.500 0v4M15.500 0v4M8.500 20v4M15.500 20v4M0 8.500h4M0 15.500h4M20 8.500h4M20 15.500h4"/></g></svg>
  <span class="f" id="sj" style="left:194.52px;transform:scaleX(0.9654)">Julia 1.5.2 | Idle</span>
  <span class="f" id="ss" style="left:530.015px;transform:scaleX(0.9847)">Saving completed</span>
  <span class="f" id="sm" style="left:894.544px;transform:scaleX(0.9704)">Mode: Command</span>
  <svg class="abs" style="left:1113.200px;top:7.400px" width="25" height="24" viewBox="0 0 25 24"><path d="M12.500 1.300L23.600 5v5.500C23.600 16 19.500 20.800 12.500 22.800C5.500 20.800 1.400 16 1.400 10.500V5z" stroke="#555" stroke-width="2.200" fill="none" stroke-linejoin="round"/><path d="M8.700 7.700l7.600 7.600M16.300 7.700l-7.600 7.600" stroke="#555" stroke-width="2.200"/></svg>
  <span class="f" id="sl" style="left:1168.687px;transform:scaleX(0.9429)">Ln 1, Col 1</span>
  <span class="f" id="su" style="left:1311.072px;transform:scaleX(1.0149)">Untitled9.ipynb</span>
 </div>
</div>
</body>
</html>
